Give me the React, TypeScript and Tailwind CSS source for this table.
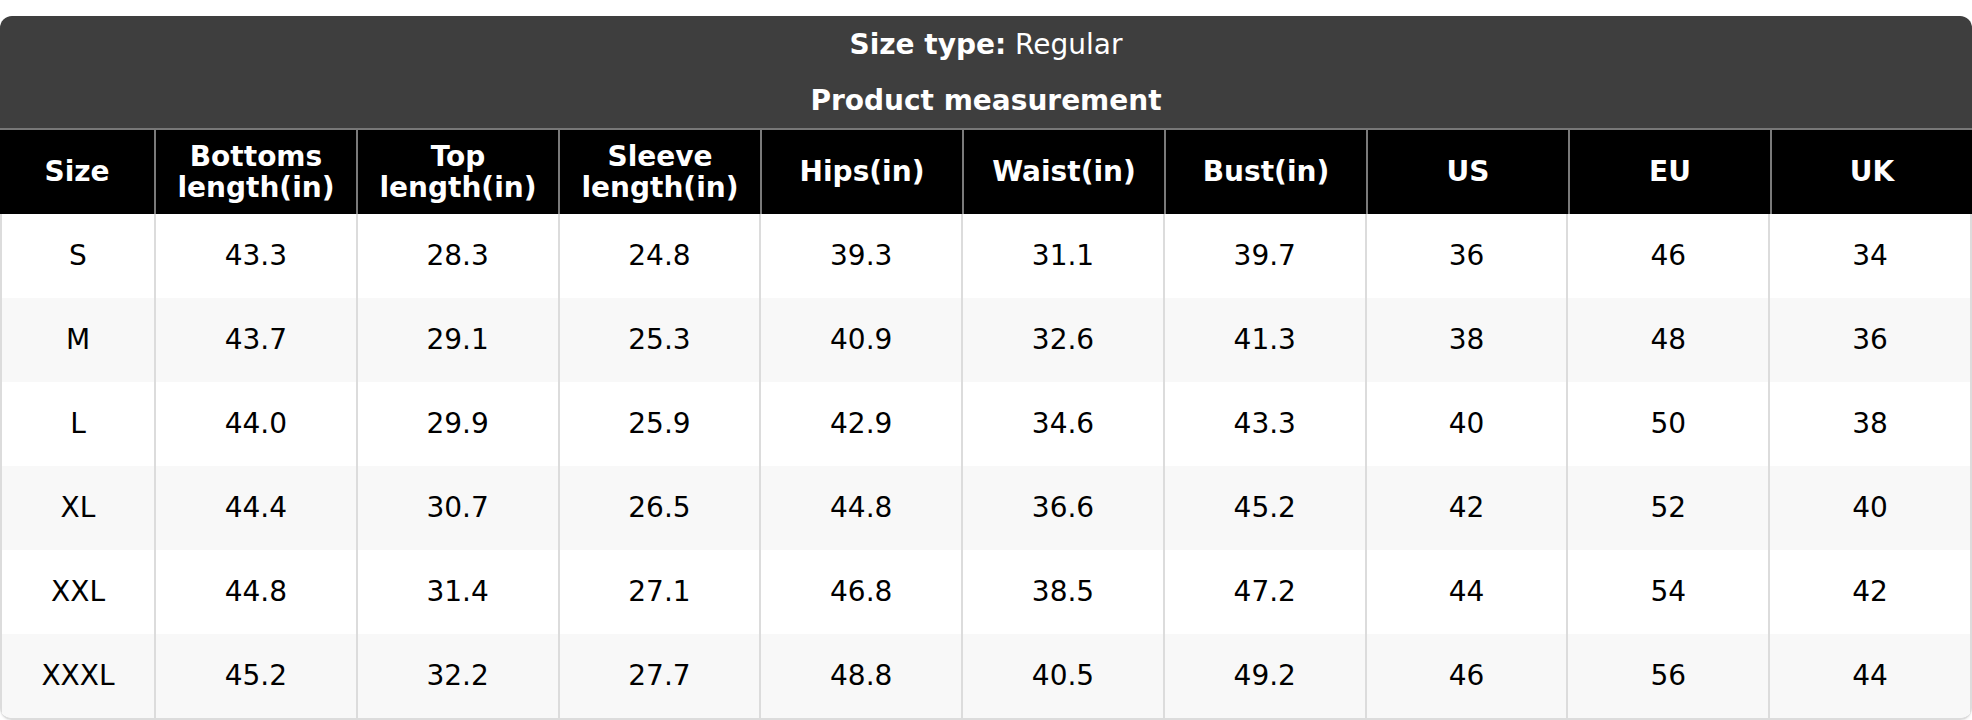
const headers = [
  ["Size"],
  ["Bottoms", "length(in)"],
  ["Top", "length(in)"],
  ["Sleeve", "length(in)"],
  ["Hips(in)"],
  ["Waist(in)"],
  ["Bust(in)"],
  ["US"],
  ["EU"],
  ["UK"],
];

const rows = [
  ["S", "43.3", "28.3", "24.8", "39.3", "31.1", "39.7", "36", "46", "34"],
  ["M", "43.7", "29.1", "25.3", "40.9", "32.6", "41.3", "38", "48", "36"],
  ["L", "44.0", "29.9", "25.9", "42.9", "34.6", "43.3", "40", "50", "38"],
  ["XL", "44.4", "30.7", "26.5", "44.8", "36.6", "45.2", "42", "52", "40"],
  ["XXL", "44.8", "31.4", "27.1", "46.8", "38.5", "47.2", "44", "54", "42"],
  ["XXXL", "45.2", "32.2", "27.7", "48.8", "40.5", "49.2", "46", "56", "44"],
];

export default function App() {
  return (
    <div className="w-[1972px] h-[720px] bg-white pt-[16px] font-['DejaVu_Sans',sans-serif]">
      <div className="rounded-[12px] overflow-hidden border-b-2 border-[#dcdcdc] shadow-[0_1px_2px_rgba(0,0,0,0.08)]">
        {/* caption */}
        <div className="bg-[#3e3e3e] h-[112px] flex flex-col items-center text-white text-[28px] leading-[42px] pt-[8px]">
          <p>
            <span className="font-bold">Size type:</span> Regular
          </p>
          <p className="font-bold mt-[14px]">Product measurement</p>
        </div>

        {/* header row */}
        <div className="grid grid-cols-[154px_repeat(9,minmax(0,1fr))] bg-black border-t-2 border-[#777]">
          {headers.map((h, i) => (
            <div
              key={i}
              className={
                "h-[84px] flex flex-col items-center justify-center text-white font-bold text-[28px] leading-[31.5px] text-center" +
                (i > 0 ? " border-l-2 border-[#7a7a7a]" : "")
              }
            >
              {h.map((line) => (
                <span key={line}>{line}</span>
              ))}
            </div>
          ))}
        </div>

        {/* body */}
        <div className="border-x-2 border-[#dcdcdc]">
          {rows.map((r, ri) => (
            <div
              key={r[0]}
              className={
                "grid grid-cols-[152px_repeat(9,minmax(0,1fr))] " +
                (ri % 2 === 1 ? "bg-[#f8f8f8]" : "bg-white")
              }
            >
              {r.map((v, ci) => (
                <div
                  key={ci}
                  className={
                    "h-[84px] flex items-center justify-center text-[28px] text-black" +
                    (ci > 0 ? " border-l-2 border-[#dcdcdc]" : "")
                  }
                >
                  {v}
                </div>
              ))}
            </div>
          ))}
        </div>
      </div>
    </div>
  );
}
